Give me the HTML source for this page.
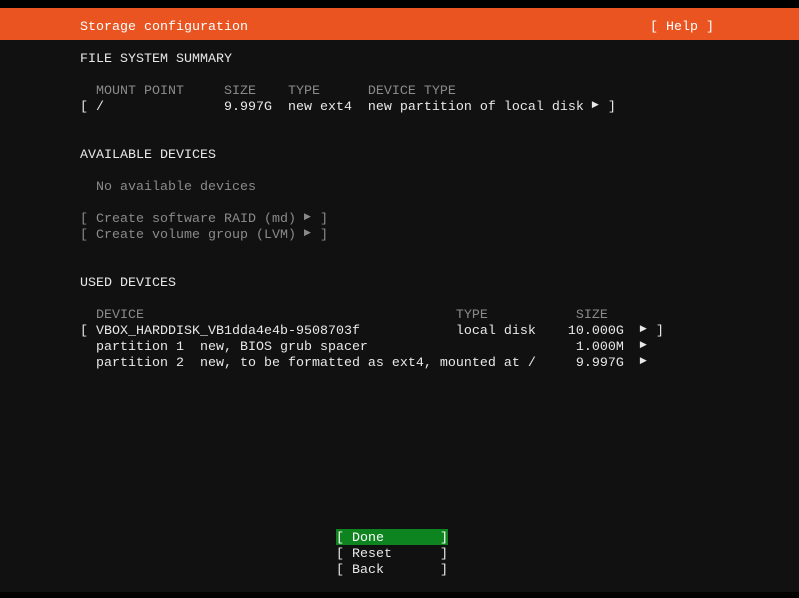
<!DOCTYPE html>
<html><head><style>
body{margin:0;width:799px;height:598px;background:#111111;overflow:hidden;position:relative;font-family:"Liberation Mono","DejaVu Sans Mono",monospace;font-size:13.33px;color:#e8e8e8}
.top{position:absolute;left:0;top:0;width:799px;height:8px;background:#000}
.bar{position:absolute;left:0;top:8px;width:799px;height:32px;background:#e95420}
.bot{position:absolute;left:0;top:592px;width:799px;height:6px;background:#000}
.l{position:absolute;white-space:pre;line-height:16px;height:16px}
.g{color:#8a8a8a}
.w{color:#fff}
.a{font-family:"DejaVu Sans",sans-serif;font-size:9px;display:inline-block;width:8px;vertical-align:top;line-height:16px;position:relative;top:-3px}
.done{position:absolute;left:336px;top:529px;width:112px;height:16px;background:#0e8420}
</style></head><body>
<div class="top"></div><div class="bar"></div><div class="bot"></div>
<div class="l w" style="left:80px;top:20px">Storage configuration</div>
<div class="l w" style="left:650px;top:20px">[ Help ]</div>
<div class="l" style="left:80px;top:52px">FILE SYSTEM SUMMARY</div>
<div class="l g" style="left:80px;top:84px">  MOUNT POINT     SIZE    TYPE      DEVICE TYPE</div>
<div class="l" style="left:80px;top:100px">[ /               9.997G  new ext4  new partition of local disk <span class="a">▶</span> ]</div>
<div class="l" style="left:80px;top:148px">AVAILABLE DEVICES</div>
<div class="l g" style="left:80px;top:180px">  No available devices</div>
<div class="l g" style="left:80px;top:212px">[ Create software RAID (md) <span class="a">▶</span> ]</div>
<div class="l g" style="left:80px;top:228px">[ Create volume group (LVM) <span class="a">▶</span> ]</div>
<div class="l" style="left:80px;top:276px">USED DEVICES</div>
<div class="l g" style="left:80px;top:308px">  DEVICE                                       TYPE           SIZE</div>
<div class="l" style="left:80px;top:324px">[ VBOX_HARDDISK_VB1dda4e4b-9508703f            local disk    10.000G  <span class="a">▶</span> ]</div>
<div class="l" style="left:80px;top:340px">  partition 1  new, BIOS grub spacer                          1.000M  <span class="a">▶</span></div>
<div class="l" style="left:80px;top:356px">  partition 2  new, to be formatted as ext4, mounted at /     9.997G  <span class="a">▶</span></div>
<div class="done"></div>
<div class="l w" style="left:336px;top:531px">[ Done       ]</div>
<div class="l" style="left:336px;top:547px">[ Reset      ]</div>
<div class="l" style="left:336px;top:563px">[ Back       ]</div>
</body></html>
